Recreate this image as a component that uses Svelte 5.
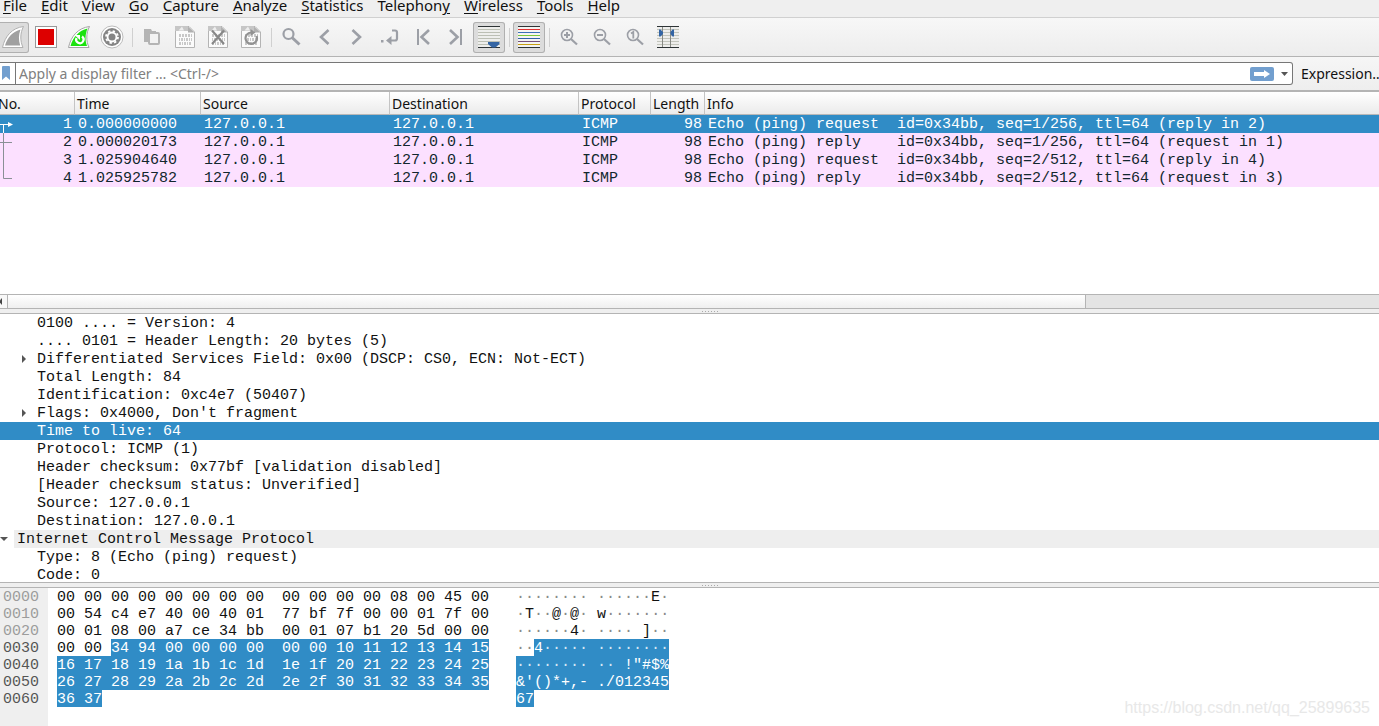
<script>
  const menus = [
    ['', 'F', 'ile'],
    ['', 'E', 'dit'],
    ['', 'V', 'iew'],
    ['', 'G', 'o'],
    ['', 'C', 'apture'],
    ['', 'A', 'nalyze'],
    ['', 'S', 'tatistics'],
    ['Telephon', 'y', ''],
    ['', 'W', 'ireless'],
    ['', 'T', 'ools'],
    ['', 'H', 'elp']
  ];

  const tools = [
    { id: 'start', label: 'Start capture', on: true },
    { id: 'stop', label: 'Stop capture' },
    { id: 'restart', label: 'Restart capture' },
    { id: 'options', label: 'Capture options' },
    null,
    { id: 'open', label: 'Open' },
    { id: 'save', label: 'Save' },
    { id: 'close', label: 'Close file' },
    { id: 'reload', label: 'Reload file' },
    null,
    { id: 'find', label: 'Find packet' },
    { id: 'back', label: 'Previous packet' },
    { id: 'forward', label: 'Next packet' },
    { id: 'goto', label: 'Go to packet' },
    { id: 'first', label: 'First packet' },
    { id: 'last', label: 'Last packet' },
    { id: 'autoscroll', label: 'Auto scroll', on: true },
    null,
    { id: 'colorize', label: 'Colorize', on: true },
    null,
    { id: 'zoomin', label: 'Zoom in' },
    { id: 'zoomout', label: 'Zoom out' },
    { id: 'zoomone', label: 'Normal size' },
    { id: 'resize', label: 'Resize columns' }
  ];

  const columns = ['No.', 'Time', 'Source', 'Destination', 'Protocol', 'Length', 'Info'];

  let selected = $state(1);
  const packets = [
    { no: 1, time: '0.000000000', info: 'Echo (ping) request  id=0x34bb, seq=1/256, ttl=64 (reply in 2)' },
    { no: 2, time: '0.000020173', info: 'Echo (ping) reply    id=0x34bb, seq=1/256, ttl=64 (request in 1)' },
    { no: 3, time: '1.025904640', info: 'Echo (ping) request  id=0x34bb, seq=2/512, ttl=64 (reply in 4)' },
    { no: 4, time: '1.025925782', info: 'Echo (ping) reply    id=0x34bb, seq=2/512, ttl=64 (request in 3)' }
  ];
  const marks = {
    1: 'M0 9.5H9M3.5 9V18',
    2: 'M0 9.5H12M3.5 0V18',
    3: 'M3.5 0V18',
    4: 'M3.5 0V9.5H12'
  };

  let field = $state(6);
  const details = [
    { text: '0100 .... = Version: 4' },
    { text: '.... 0101 = Header Length: 20 bytes (5)' },
    { text: 'Differentiated Services Field: 0x00 (DSCP: CS0, ECN: Not-ECT)', closed: true },
    { text: 'Total Length: 84' },
    { text: 'Identification: 0xc4e7 (50407)' },
    { text: "Flags: 0x4000, Don't fragment", closed: true },
    { text: 'Time to live: 64' },
    { text: 'Protocol: ICMP (1)' },
    { text: 'Header checksum: 0x77bf [validation disabled]' },
    { text: '[Header checksum status: Unverified]' },
    { text: 'Source: 127.0.0.1' },
    { text: 'Destination: 127.0.0.1' },
    { text: 'Internet Control Message Protocol', top: true },
    { text: 'Type: 8 (Echo (ping) request)' },
    { text: 'Code: 0' }
  ];

  // Each row: offset, plain hex, marked hex, plain ascii, marked ascii
  const dump = [
    ['0000', '00 00 00 00 00 00 00 00  00 00 00 00 08 00 45 00', '', '········ ······E·', ''],
    ['0010', '00 54 c4 e7 40 00 40 01  77 bf 7f 00 00 01 7f 00', '', '·T··@·@· w·······', ''],
    ['0020', '00 01 08 00 a7 ce 34 bb  00 01 07 b1 20 5d 00 00', '', '······4· ···· ]··', ''],
    ['0030', '00 00 ', '34 94 00 00 00 00  00 00 10 11 12 13 14 15', '··', '4····· ········'],
    ['0040', '', '16 17 18 19 1a 1b 1c 1d  1e 1f 20 21 22 23 24 25', '', '········ ·· !"#$%'],
    ['0050', '', '26 27 28 29 2a 2b 2c 2d  2e 2f 30 31 32 33 34 35', '', "&'()*+,- ./012345"],
    ['0060', '', '36 37', '', '67']
  ];
  const runs = (s) => s.match(/·+|[^·]+/g) ?? [];
  const lines = [6.5, 9.5, 12.5, 15.5, 18.5, 21.5];
  const hues = ['#e03030', '#3a6fb8', '#7ac83a', '#2f62a8', '#75507b', '#c8a012'];
</script>

{#snippet page()}
  <path d="M6.5 4.5H20L25.5 10V25.5H6.5Z" fill="#fbfbfb" stroke="#b4b4b4" />
  <path d="M6 4H19V9H6Z" fill="#c6c6c6" />
  <path d="M9.500 8.500L13 4.500L15 8.500Z" fill="#eee" />
  <path d="M19 4.500V10.500H25.500Z" fill="#b0b0b0" />
  <g stroke="#c8c8c8" stroke-width="3">
    <path d="M10 13.500H23" stroke-dasharray="2 1" />
    <path d="M10 17.500H23" stroke-dasharray="1 1 2 1" />
    <path d="M10 21.500H23" stroke-dasharray="2 1 1 1" />
  </g>
{/snippet}

{#snippet lens()}
  <circle cx="14" cy="13" r="5.500" fill="none" stroke="#9c9fa6" stroke-width="1.600" />
  <path d="M18 17L24 22.500" stroke="#9c9fa6" stroke-width="2.200" />
{/snippet}

{#snippet icon(id)}
  <svg viewBox="0 0 32 31" aria-hidden="true" fill="none">
    {#if id === 'start'}
      <path d="M26.500 4.500C15 6 8 14 5.500 25.500H26C23 19 23 11 26.500 4.500Z" fill="#fff" stroke="#b0b0b0" />
      <path d="M23.500 7.500C16 9.500 10.500 15 8 23.500H23.200C21.500 18 21.500 13 23.500 7.500Z" fill="#a0a0a0" />
    {:else if id === 'stop'}
      <rect x="5.500" y="4.500" width="21" height="21" fill="#fff" stroke="#999" />
      <rect x="8" y="7" width="16" height="16" fill="#d00" />
    {:else if id === 'restart'}
      <path d="M26.500 4.500C15 6 8 14 5.500 25.500H26C23 19 23 11 26.500 4.500Z" fill="#fff" stroke="#a4a4a4" />
      <path d="M24.500 6.500C16 8.500 10 15 7.500 24H24C22 18 22 13 24.500 6.500Z" fill="#1be20e" />
      <path d="M19 14.500A3.700 3.700 0 1 1 13.500 16" stroke="#fff" stroke-width="2.200" />
      <path d="M11.500 13H17V18Z" fill="#fff" />
    {:else if id === 'options'}
      <circle cx="16" cy="15" r="11" fill="#fff" stroke="#bbb" />
      <circle cx="16" cy="15" r="9" fill="#858585" />
      <circle cx="16" cy="15" r="5.400" fill="#fff" />
      <circle cx="16" cy="15" r="6" stroke="#fff" stroke-width="1.800" stroke-dasharray="2.360 2.350" />
      <circle cx="16" cy="15" r="3.500" fill="#858585" />
    {:else if id === 'open'}
      <path d="M8 7H15L16 9H20V20H8Z" fill="#b4b4b4" />
      <rect x="13" y="11" width="10" height="11" rx="1" fill="#f2f2f2" stroke="#b4b4b4" stroke-width="2" />
    {:else if id === 'save'}
      {@render page()}
    {:else if id === 'close'}
      {@render page()}
      <path d="M10 8.500L22 22M22 8.500L10 22" stroke="#888" stroke-width="2.200" />
    {:else if id === 'reload'}
      {@render page()}
      <path d="M16 10.500A5.700 5.700 0 1 0 21.500 14" stroke="#929292" stroke-width="2.200" />
      <path d="M15.500 7L20.500 10.500L15.500 14Z" fill="#929292" />
    {:else if id === 'find'}
      <circle cx="13.500" cy="12" r="5" stroke="#9c9fa6" stroke-width="2.200" />
      <path d="M17 15.500L24.500 22.500" stroke="#9c9fa6" stroke-width="3" />
    {:else if id === 'back'}
      <path d="M20.500 8L13 15L20.500 22" stroke="#9c9fa6" stroke-width="2.600" />
    {:else if id === 'forward'}
      <path d="M11.500 8L19 15L11.500 22" stroke="#9c9fa6" stroke-width="2.600" />
    {:else if id === 'goto'}
      <path d="M18 8.500H21Q23 8.500 23 10.500V16.500Q23 18.500 21 18.500H15" stroke="#9c9fa6" stroke-width="2.200" />
      <path d="M17.500 14V23L12 18.500Z" fill="#9c9fa6" />
      <path d="M7 18H9.500V20.500H7Z" fill="#9c9fa6" />
    {:else if id === 'first'}
      <path d="M11 7V23" stroke="#9c9fa6" stroke-width="2" />
      <path d="M22 8L14.500 15L22 22" stroke="#9c9fa6" stroke-width="2.600" />
    {:else if id === 'last'}
      <path d="M21 7V23" stroke="#9c9fa6" stroke-width="2" />
      <path d="M10 8L17.500 15L10 22" stroke="#9c9fa6" stroke-width="2.600" />
    {:else if id === 'autoscroll'}
      <path d="M5 5H27V25H5Z" fill="#eeeeec" />
      <path d="M5 7.500H27M5 10.500H27M5 13.500H27M5 16.500H27M5 19.500H27M5 22.500H27" stroke="#bcbfb4" />
      <path d="M5 4.500H27M5 25.500H27" stroke="#2e3436" />
      <path d="M15 20H26.500V22L22.500 25.500H19L15 22Z" fill="#3465a4" />
    {:else if id === 'colorize'}
      <path d="M5 5H27V25H5Z" fill="#f4f4f2" />
      <path d="M5 4.500H27M5 25.500H27" stroke="#2e3436" />
      {#each hues as hue, i}
        <path d="M5 {7.5 + i * 3}H27" stroke={hue} />
      {/each}
    {:else if id === 'zoomin'}
      {@render lens()}
      <path d="M11 13H17M14 10V16" stroke="#9c9fa6" stroke-width="2" />
    {:else if id === 'zoomout'}
      {@render lens()}
      <path d="M11 13H17" stroke="#9c9fa6" stroke-width="2" />
    {:else if id === 'zoomone'}
      {@render lens()}
      <path d="M12 11.500L14.300 10V16.500" stroke="#9c9fa6" stroke-width="1.800" />
    {:else if id === 'resize'}
      <path d="M5 5H27V25H5Z" fill="#eeeeec" />
      {#each lines as y}
        <path d="M5 {y + 1}H27" stroke="#c3c5bc" />
      {/each}
      <path d="M5 4.500H27M5 25.500H27" stroke="#2e3436" />
      <path d="M10.500 5V25M18.500 5V25" stroke="#888a85" />
      <path d="M7 7.500H8.500L11 10V12L8.500 14.500H7ZM22 7.500H20.500L18.500 10V12L20.500 14.500H22Z" fill="#3465a4" />
    {/if}
  </svg>
{/snippet}

{#snippet ascii(s)}{#each runs(s) as r}{#if r[0] === '·'}<i>{r}</i>{:else}{r}{/if}{/each}{/snippet}

<div class="window">
  <nav class="menubar">
    {#each menus as [before, key, after]}
      <button>{before}<u>{key}</u>{after}</button>
    {/each}
  </nav>

  <div class="toolbar" role="toolbar" aria-label="Main toolbar">
    {#each tools as tool}
      {#if tool}
        <button class="tool" class:on={tool.on} aria-label={tool.label}>{@render icon(tool.id)}</button>
      {:else}
        <span class="sep"></span>
      {/if}
    {/each}
  </div>

  <div class="filterbar">
    <div class="filter">
      <button class="bookmark" aria-label="Bookmarks">
        <svg width="8" height="15" viewBox="0 0 8 15" aria-hidden="true"><path d="M0 1Q0 0 1 0H7Q8 0 8 1V14L4 10.500L0 14Z" fill="#729fcf" /></svg>
      </button>
      <input type="text" aria-label="Display filter" placeholder="Apply a display filter … <Ctrl-/>" />
      <button class="apply" aria-label="Apply filter">
        <svg width="24" height="14" viewBox="0 0 24 14" aria-hidden="true">
          <rect width="24" height="14" rx="2" fill="#729fcf" />
          <path d="M4 5H14V3L20 7L14 11V9H4Z" fill="#fff" />
        </svg>
      </button>
      <button class="recent" aria-label="Recent filters">
        <svg width="7" height="4" viewBox="0 0 7 4" aria-hidden="true"><path d="M0 0H7L3.500 4Z" fill="#555" /></svg>
      </button>
    </div>
    <button class="expression">Expression…</button>
  </div>

  <main>
    <section class="list">
      <div class="rows">
        <table>
          <colgroup>
            <col class="c-no" /><col class="c-time" /><col class="c-addr" /><col class="c-addr" />
            <col class="c-proto" /><col class="c-len" /><col />
          </colgroup>
          <thead>
            <tr>{#each columns as c}<th scope="col">{c}</th>{/each}</tr>
          </thead>
          <tbody>
            {#each packets as p}
              <tr class:sel={p.no === selected} onclick={() => (selected = p.no)}>
                <td class="num">
                  <div>
                    <svg width="14" height="18" viewBox="0 0 14 18" aria-hidden="true">
                      <path d={marks[p.no]} fill="none" stroke="currentColor" />
                      {#if p.no === 1}<path d="M8 7L13 9.500L8 12Z" fill="currentColor" />{/if}
                    </svg>
                    <span>{p.no}</span>
                  </div>
                </td>
                <td>{p.time}</td>
                <td>127.0.0.1</td>
                <td>127.0.0.1</td>
                <td>ICMP</td>
                <td class="right">98</td>
                <td>{p.info}</td>
              </tr>
            {/each}
          </tbody>
        </table>
      </div>
      <div class="scroll">
        <button aria-label="Scroll left">
          <svg width="4" height="7" viewBox="0 0 4 7" aria-hidden="true"><path d="M2 0V7L-1 3.500Z" fill="#444" /></svg>
        </button>
        <span class="thumb"></span>
        <span class="track"></span>
      </div>
    </section>

    <div class="split"><span class="grip"></span></div>

    <ul class="tree">
      {#each details as d, i}
        <li class:sel={i === field} class:top={d.top}>
          {#if d.top}
            <button class="twist" aria-label="Collapse">
              <svg width="8" height="4" viewBox="0 0 8 4" aria-hidden="true"><path d="M0 0H8L4 4Z" fill="#555" /></svg>
            </button>
          {:else if d.closed}
            <button class="twist" aria-label="Expand">
              <svg width="4" height="8" viewBox="0 0 4 8" aria-hidden="true"><path d="M0 0V8L4 4Z" fill="#555" /></svg>
            </button>
          {/if}
          <button class="label" onclick={() => (field = i)}>{d.text}</button>
        </li>
      {/each}
    </ul>

    <div class="split lower"><span class="grip"></span></div>

    <section class="bytes">
      <div class="offsets">
        {#each dump as row, i}<div class:dark={i > 2}><span>{row[0]}</span></div>{/each}
      </div>
      <div class="hex">
        {#each dump as row}<div>{#if row[1]}<span>{row[1]}</span>{/if}{#if row[2]}<mark>{row[2]}</mark>{/if}</div>{/each}
      </div>
      <div class="ascii">
        {#each dump as row}<div>{#if row[3]}<span>{@render ascii(row[3])}</span>{/if}{#if row[4]}<mark>{@render ascii(row[4])}</mark>{/if}</div>{/each}
      </div>
    </section>
  </main>

  <div class="watermark">https://blog.csdn.net/qq_25899635</div>
</div>

<style>
  :global(body) {
    margin: 0;
    overflow: hidden;
  }
  .window {
    position: relative;
    display: flex;
    flex-direction: column;
    height: 100vh;
    overflow: hidden;
    background: #efefef;
    color: #111;
    font: 15px/18px 'Noto Sans', sans-serif;
  }
  button {
    margin: 0;
    padding: 0;
    border: 0;
    background: none;
    color: inherit;
    font: inherit;
    white-space: pre;
  }
  svg {
    display: block;
  }

  .menubar {
    display: flex;
    flex: none;
    gap: 14px;
    padding: 0 3px 6px;
    border-bottom: 1px solid #d0d0d0;
  }
  .menubar button {
    line-height: 11px;
  }
  .menubar u {
    text-underline-offset: 2px;
    text-decoration-thickness: 1px;
  }

  .toolbar {
    display: flex;
    flex: none;
    gap: 1px;
    margin-left: -3px;
    padding: 4px 0 3px;
    border-bottom: 1px solid #b4b4b4;
    background: linear-gradient(#f7f7f7, #ededed);
  }
  .tool {
    flex: none;
    box-sizing: border-box;
    width: 32px;
    height: 31px;
    border-radius: 3px;
  }
  .tool.on {
    background: #dcdcdc;
    box-shadow: inset 0 0 0 1px #b0b0b0;
  }
  .sep {
    flex: none;
    width: 6px;
    margin: 6px 0;
    background: linear-gradient(#d0d0d0, #d0d0d0) 3px 0 / 1px 100% no-repeat;
  }

  .filterbar {
    display: flex;
    flex: none;
    padding: 5px 0;
    border-bottom: 2px solid #b4b4b4;
    background: linear-gradient(#f6f6f6, #eee);
    font-size: 14px;
  }
  .filter {
    display: flex;
    flex: 1;
    min-width: 0;
    height: 21px;
    border: 1px solid #777;
    border-left: 0;
    border-radius: 0 3px 3px 0;
    background: #fff;
  }
  .bookmark {
    flex: none;
    width: 16px;
    padding-left: 2px;
    border-right: 1px solid #777;
  }
  .filter input {
    flex: 1;
    min-width: 0;
    padding: 0 3px;
    border: 0;
    outline: 0;
    background: none;
    font: inherit;
  }
  .filter input::placeholder {
    color: #808080;
    opacity: 1;
  }
  .apply {
    padding: 0 7px 0 0;
  }
  .recent {
    padding-right: 4px;
  }
  .expression {
    flex: none;
    width: 86px;
    padding-left: 8px;
    overflow: hidden;
    text-align: left;
  }

  main {
    display: grid;
    flex: 1;
    grid-template-rows: minmax(0, 217fr) 5px minmax(0, 268fr) 6px minmax(0, 138fr);
    min-height: 0;
    background: #fff;
  }
  .list {
    display: flex;
    flex-direction: column;
    min-height: 0;
  }
  .rows {
    flex: 1;
    overflow: hidden;
  }
  table {
    width: 100%;
    border-collapse: separate;
    border-spacing: 0;
    table-layout: fixed;
  }
  .c-no {
    width: 75px;
  }
  .c-time {
    width: 126px;
  }
  .c-addr {
    width: 189px;
  }
  .c-proto {
    width: 72px;
  }
  .c-len {
    width: 54px;
  }
  th {
    height: 20px;
    padding: 2px 2px 0;
    border-right: 1px solid #c4c4c4;
    border-bottom: 1px solid #b8b8b8;
    background: linear-gradient(#fff, #ebebeb);
    font-size: 14px;
    font-weight: 400;
    text-align: left;
  }
  th:first-child {
    text-indent: -4px;
  }
  th:last-child {
    border-right: 0;
  }
  td {
    padding: 2px 3px 0;
    overflow: hidden;
    background: #fce0ff;
    color: #12272e;
    font: 15px/16px 'Liberation Mono', monospace;
    white-space: pre;
  }
  .sel td {
    background: #308cc6;
    color: #fff;
  }
  .num {
    padding: 0 3px 0 0;
  }
  .num div {
    display: flex;
    justify-content: space-between;
  }
  .num span {
    padding-top: 2px;
  }
  .num svg {
    color: #8a9096;
  }
  .sel .num svg {
    color: #fff;
  }
  .right {
    text-align: right;
  }
  .scroll {
    display: flex;
    flex: none;
    height: 13px;
    border: solid #b4b4b4;
    border-width: 1px 0;
    background: #e4e4e4;
  }
  .scroll button {
    width: 8px;
    border-right: 1px solid #b4b4b4;
    background: #f8f8f8;
  }
  .thumb {
    box-sizing: border-box;
    flex: 1078;
    border-right: 1px solid #b4b4b4;
    background: linear-gradient(#fff, #efefef);
  }
  .track {
    flex: 293;
  }

  .split {
    display: flex;
    justify-content: center;
    align-items: center;
    border-bottom: 1px solid #b4b4b4;
    background: #efefef;
  }
  .split.lower {
    border-top: 1px solid #b4b4b4;
  }
  .grip {
    width: 17px;
    height: 1px;
    margin-left: 42px;
    background: repeating-linear-gradient(90deg, #aaa 0 1px, transparent 1px 3px);
  }

  .tree {
    margin: 0;
    padding: 0;
    overflow: hidden;
    list-style: none;
    font: 15px/16px 'Liberation Mono', monospace;
  }
  .tree li {
    position: relative;
    display: flex;
    padding-left: 37px;
  }
  .tree .label {
    flex: 1;
    padding-top: 2px;
    text-align: left;
  }
  .tree .sel {
    background: #308cc6;
    color: #fff;
  }
  .tree .top {
    padding-left: 14px;
  }
  .tree .top .label {
    padding-left: 3px;
    background: #eee;
  }
  .twist {
    position: absolute;
    top: 5px;
    left: 22px;
  }
  .top .twist {
    top: 7px;
    left: 0;
  }

  .bytes {
    display: flex;
    overflow: hidden;
    font: 15px/15px 'Liberation Mono', monospace;
    white-space: pre;
  }
  .bytes div div {
    display: flex;
    height: 17px;
  }
  .bytes span,
  .bytes mark {
    padding-top: 2px;
  }
  .offsets {
    box-sizing: border-box;
    width: 48px;
    padding-left: 3px;
    background: #efefef;
    color: #9c9c9c;
  }
  .dark {
    color: #555;
  }
  .hex {
    width: 459px;
    padding-left: 9px;
  }
  .bytes mark {
    background: #308cc6;
    color: #fff;
  }
  .bytes i {
    color: #8a8a8a;
    font-style: normal;
  }
  .bytes mark i {
    color: #d6e8f4;
  }
  .watermark {
    position: absolute;
    right: 9px;
    bottom: 9px;
    color: #e8e8e8;
    font: 16px/18px 'Liberation Sans', sans-serif;
  }
</style>
